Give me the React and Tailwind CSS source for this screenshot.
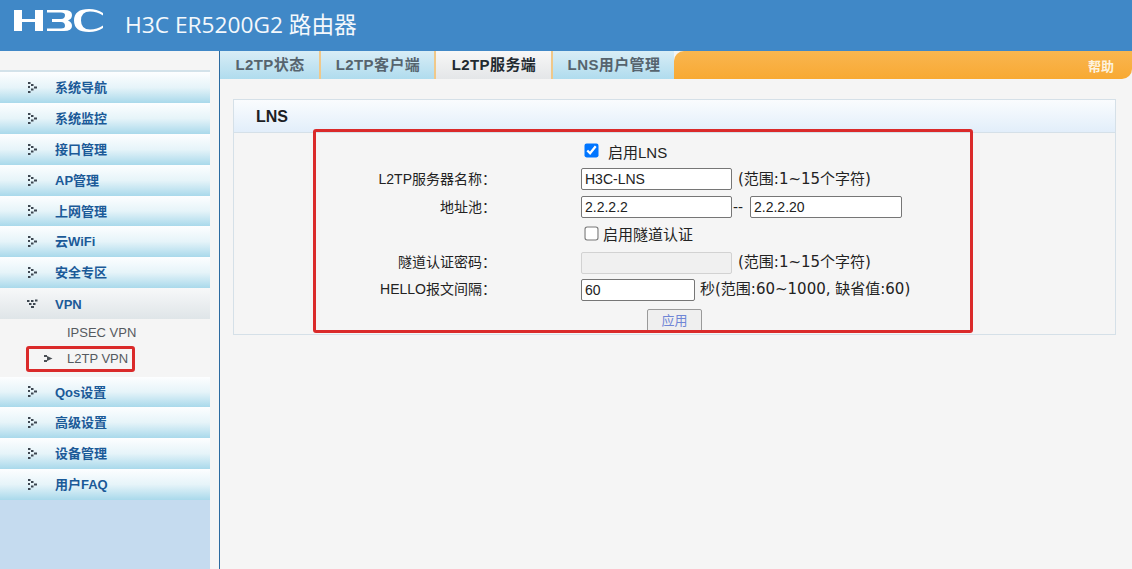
import { useState } from 'react'

const FONT = "font-['Liberation_Sans','Noto_Sans_CJK_SC',sans-serif]"

const menuTop = [
    { name: '系统导航' },
    { name: '系统监控' },
    { name: '接口管理' },
    { name: 'AP管理' },
    { name: '上网管理', short: true },
    { name: '云WiFi' },
    { name: '安全专区' },
]
const menuBottom = [
    { name: 'Qos设置', short: true },
    { name: '高级设置' },
    { name: '设备管理' },
    { name: '用户FAQ' },
]
const tabs = [
    { name: 'L2TP状态', width: 'w-[101px]' },
    { name: 'L2TP客户端', width: 'w-[115px]' },
    { name: 'L2TP服务端', width: 'w-[117px]', active: true },
    { name: 'LNS用户管理', width: 'w-[121px]', last: true },
]

function Logo() {
    return (
        <svg width="89" height="23" viewBox="0 0 89 23" className="block">
            <g fill="#ffffff">
                {/* H */}
                <rect x="0" y="1" width="8" height="21" />
                <rect x="21" y="1" width="8" height="21" />
                <rect x="7" y="10" width="15" height="3" />
                {/* 3 */}
                <path d="M33 1 H50 Q58 1 58 6 Q58 10 54 11.5 Q58 13 58 17 Q58 22 50 22 H33 V19.5 H47 Q51 19.5 51 17 Q51 13 47 13 H38 V10 H47 Q51 10 51 6 Q51 3.5 47 3.5 H33 Z" />
                {/* C */}
                <path d="M89 4 Q83 0 75 0 Q60 0 60 11.5 Q60 23 75 23 Q83 23 89 19 V16.5 Q83 20.5 76 20.5 Q67 20.5 67 11.5 Q67 2.5 76 2.5 Q83 2.5 89 6.5 Z" />
            </g>
        </svg>
    )
}

function MenuDots({ open }) {
    if (open) {
        return (
            <svg width="11" height="9" viewBox="0 0 11 9" fill="#3c4650" className="block">
                <rect x="0" y="1" width="2.5" height="2" />
                <rect x="4" y="1" width="2.5" height="2" />
                <rect x="8" y="0.5" width="2.5" height="2" />
                <rect x="2" y="4" width="2.5" height="2" />
                <rect x="6" y="4" width="2.5" height="2" />
                <rect x="4" y="7" width="3" height="2" />
            </svg>
        )
    }
    return (
        <svg width="10" height="11" viewBox="0 0 10 11" fill="#3c4650" className="block">
            <rect x="1" y="0" width="2.5" height="2" />
            <rect x="4" y="2" width="2.5" height="2" />
            <rect x="7" y="4.5" width="3" height="2" />
            <rect x="1" y="4" width="2" height="2" />
            <rect x="4" y="6.5" width="2.5" height="2" />
            <rect x="1" y="9" width="2.5" height="2" />
        </svg>
    )
}

function MenuItem({ name, short }) {
    return (
        <div className={`${short ? 'h-[30px]' : 'h-[31px]'} pb-[1px] flex items-center bg-gradient-to-b from-[#fdfeff] via-[#e6f4f9] to-[#a9d9eb]`}>
            <div className="w-[27px]" />
            <div className="w-[28px]"><MenuDots /></div>
            <span className="text-[13px] font-bold text-[#1b5a98] mt-[2px]">{name}</span>
        </div>
    )
}

function Sidebar() {
    return (
        <aside className="w-[219px] shrink-0 flex">
            <div className="w-[210px] flex flex-col bg-[#c5dbef]">
                <div className="h-[21px] bg-[#f5f5f5] border-b-[2px] border-[#d3e2ea]" />
                {menuTop.map((m) => <MenuItem key={m.name} {...m} />)}

                {/* VPN 展开 */}
                <div className="h-[31px] flex items-center bg-gradient-to-b from-[#f7f8f9] to-[#dfe5e8]">
                    <div className="w-[27px]" />
                    <div className="w-[28px]"><MenuDots open /></div>
                    <span className="text-[13px] font-bold text-[#1b5a98] mt-[2px]">VPN</span>
                </div>
                <div className="h-[58px] bg-[#f5f5f5] text-[13px] text-[#555a60] relative">
                    <div className="h-[27px] pl-[67px] pt-[3px] leading-[22px]">IPSEC VPN</div>
                    <div className="h-[26px] pl-[67px] pt-[2px] leading-[22px] flex items-start relative">
                        <svg width="9" height="7" viewBox="0 0 9 7" fill="#4a4f55" className="absolute left-[44px] top-[9px]">
                            <rect x="0" y="0" width="3" height="2" />
                            <rect x="0" y="5" width="3" height="2" />
                            <path d="M3 1 L8.5 3.5 L3 6 Z" />
                        </svg>
                        L2TP VPN
                    </div>
                    <div className="absolute left-[26px] top-[27px] w-[109px] h-[26px] border-[3px] border-[#da2a2a] rounded-[3px]" />
                </div>
                {menuBottom.map((m) => <MenuItem key={m.name} {...m} />)}
            </div>
            <div className="w-[9px] bg-[#f5f5f5]" />
        </aside>
    )
}

function TabBar() {
    return (
        <div className="h-[28px] flex bg-[#f5f5f5]">
            {tabs.map((t) => (
                <div
                    key={t.name}
                    className={`${t.width} ${t.last ? '' : 'border-r-[2px] border-[#f0c889]'} pl-[1px] text-[15px] font-bold tracking-[0.4px] flex items-center justify-center ${
                        t.active
                            ? 'bg-gradient-to-b from-[#f7f7f7] to-[#e4e6e8] text-[#222a30]'
                            : 'bg-gradient-to-b from-[#d8edf6] to-[#b0dcee] text-[#56646e]'
                    }`}
                >
                    {t.name}
                </div>
            ))}
            <div className="flex-1 flex items-center justify-end pr-[18px] rounded-tl-[10px] rounded-br-[10px] bg-gradient-to-b from-[#f9b64f] to-[#f8a932]">
                <span className="text-[13px] font-bold text-[#fdf3df] mt-[4px]">帮助</span>
            </div>
        </div>
    )
}

function Label({ children }) {
    return <div className="w-[262px] shrink-0 text-right text-[14px] text-[#222]">{children}</div>
}

function Hint({ className = '', children }) {
    return <span className={`font-['DejaVu_Sans','Noto_Sans_CJK_SC',sans-serif] text-[15px] whitespace-nowrap ${className}`}>{children}</span>
}

function TextBox({ value, onChange, disabled, width = 'w-[151px]' }) {
    return (
        <input
            value={value}
            onChange={onChange}
            disabled={disabled}
            className={`${width} h-[22px] px-[3px] text-[14px] text-[#222] rounded-[2px] border ${
                disabled ? 'bg-[#f0f0f0] border-[#d2d2d2]' : 'bg-white border-[#767676]'
            }`}
        />
    )
}

function LnsForm() {
    // 입력값 상태
    const [form, setForm] = useState({ name: 'H3C-LNS', start: '2.2.2.2', end: '2.2.2.20', hello: '60' })
    const [lns, setLns] = useState(true)
    const [tunnel, setTunnel] = useState(false)

    const set = (k) => (e) => setForm({ ...form, [k]: e.target.value })

    return (
        <div className="text-[14px] text-[#222] relative h-[200px]">
            <div className="h-[33px] flex items-center">
                <div className="w-[351px] shrink-0" />
                <input
                    type="checkbox"
                    checked={lns}
                    onChange={(e) => setLns(e.target.checked)}
                    className="w-[13px] h-[13px] accent-[#0075ff] mt-[2px] scale-[1.08]"
                />
                <span className="ml-[10px] mt-[7px] text-[15px]">启用LNS</span>
            </div>
            <div className="h-[28px] -mt-[1px] flex items-center">
                <Label>L2TP服务器名称：</Label>
                <div className="w-[85px]" />
                <TextBox value={form.name} onChange={set('name')} />
                <Hint className="ml-[6px]">(范围:1~15个字符)</Hint>
            </div>
            <div className="h-[28px] flex items-center">
                <Label>地址池：</Label>
                <div className="w-[85px]" />
                <TextBox value={form.start} onChange={set('start')} />
                <span className="ml-[1px] mr-[5px] w-[12px] text-[15px]">--</span>
                <TextBox value={form.end} onChange={set('end')} width="w-[152px]" />
            </div>
            <div className="h-[28px] flex items-center">
                <div className="w-[351px] shrink-0" />
                <input
                    type="checkbox"
                    checked={tunnel}
                    onChange={(e) => setTunnel(e.target.checked)}
                    className="w-[13px] h-[13px] -mt-[3px] scale-[1.08]"
                />
                <span className="ml-[5px] text-[15px]">启用隧道认证</span>
            </div>
            <div className="h-[27px] flex items-center">
                <Label>隧道认证密码：</Label>
                <div className="w-[85px]" />
                <TextBox value="" disabled={!tunnel} />
                <Hint className="ml-[6px]">(范围:1~15个字符)</Hint>
            </div>
            <div className="h-[27px] flex items-center">
                <Label>HELLO报文间隔：</Label>
                <div className="w-[85px]" />
                <TextBox value={form.hello} onChange={set('hello')} width="w-[114px]" />
                <Hint className="ml-[5px] -mt-[1px]">秒(范围:60~1000, 缺省值:60)</Hint>
            </div>
            <div className="flex pt-[6px]">
                <div className="w-[413px] shrink-0" />
                <button className="w-[55px] h-[24px] text-[13px] text-[#6f86d6] border border-[#9a9a9a] rounded-[2px] bg-[#efefef]">应用</button>
            </div>
        </div>
    )
}

export default function App() {
    return (
        <div className={`${FONT} w-full h-[569px] overflow-hidden flex flex-col bg-[#f5f5f5]`}>
            {/* 상단 헤더 */}
            <header className="h-[51px] shrink-0 bg-[#4088c7] flex items-start">
                <div className="ml-[14px] mt-[9px]"><Logo /></div>
                <h1 className="ml-[22px] mt-[8px] text-[22.7px] text-[#f4f8fc] font-['Open_Sans','Noto_Sans_CJK_SC',sans-serif] whitespace-nowrap">H3C ER5200G2 路由器</h1>
            </header>

            <div className="flex-1 flex min-h-0">
                <Sidebar />
                <main className="flex-1 border-l border-[#2c6aa0]">
                    <TabBar />
                    {/* LNS 패널 */}
                    <section className="relative ml-[13px] mr-[16px] mt-[20px] h-[236px] border border-[#d5e0e8] bg-[#f5f5f5]">
                        <div className="h-[33px] px-[22px] pt-[1px] flex items-center bg-gradient-to-b from-[#fafcfe] to-[#e2eefa] border-b border-[#d5e0e8] text-[16px] font-bold text-[#1c2024]">
                            LNS
                        </div>
                        <LnsForm />
                        {/* 빨간 표시 박스 */}
                        <div className="absolute left-[79px] top-[29px] w-[660px] h-[204px] border-[3px] border-[#da2a2a] rounded-[3px] pointer-events-none" />
                    </section>
                </main>
            </div>
        </div>
    )
}
